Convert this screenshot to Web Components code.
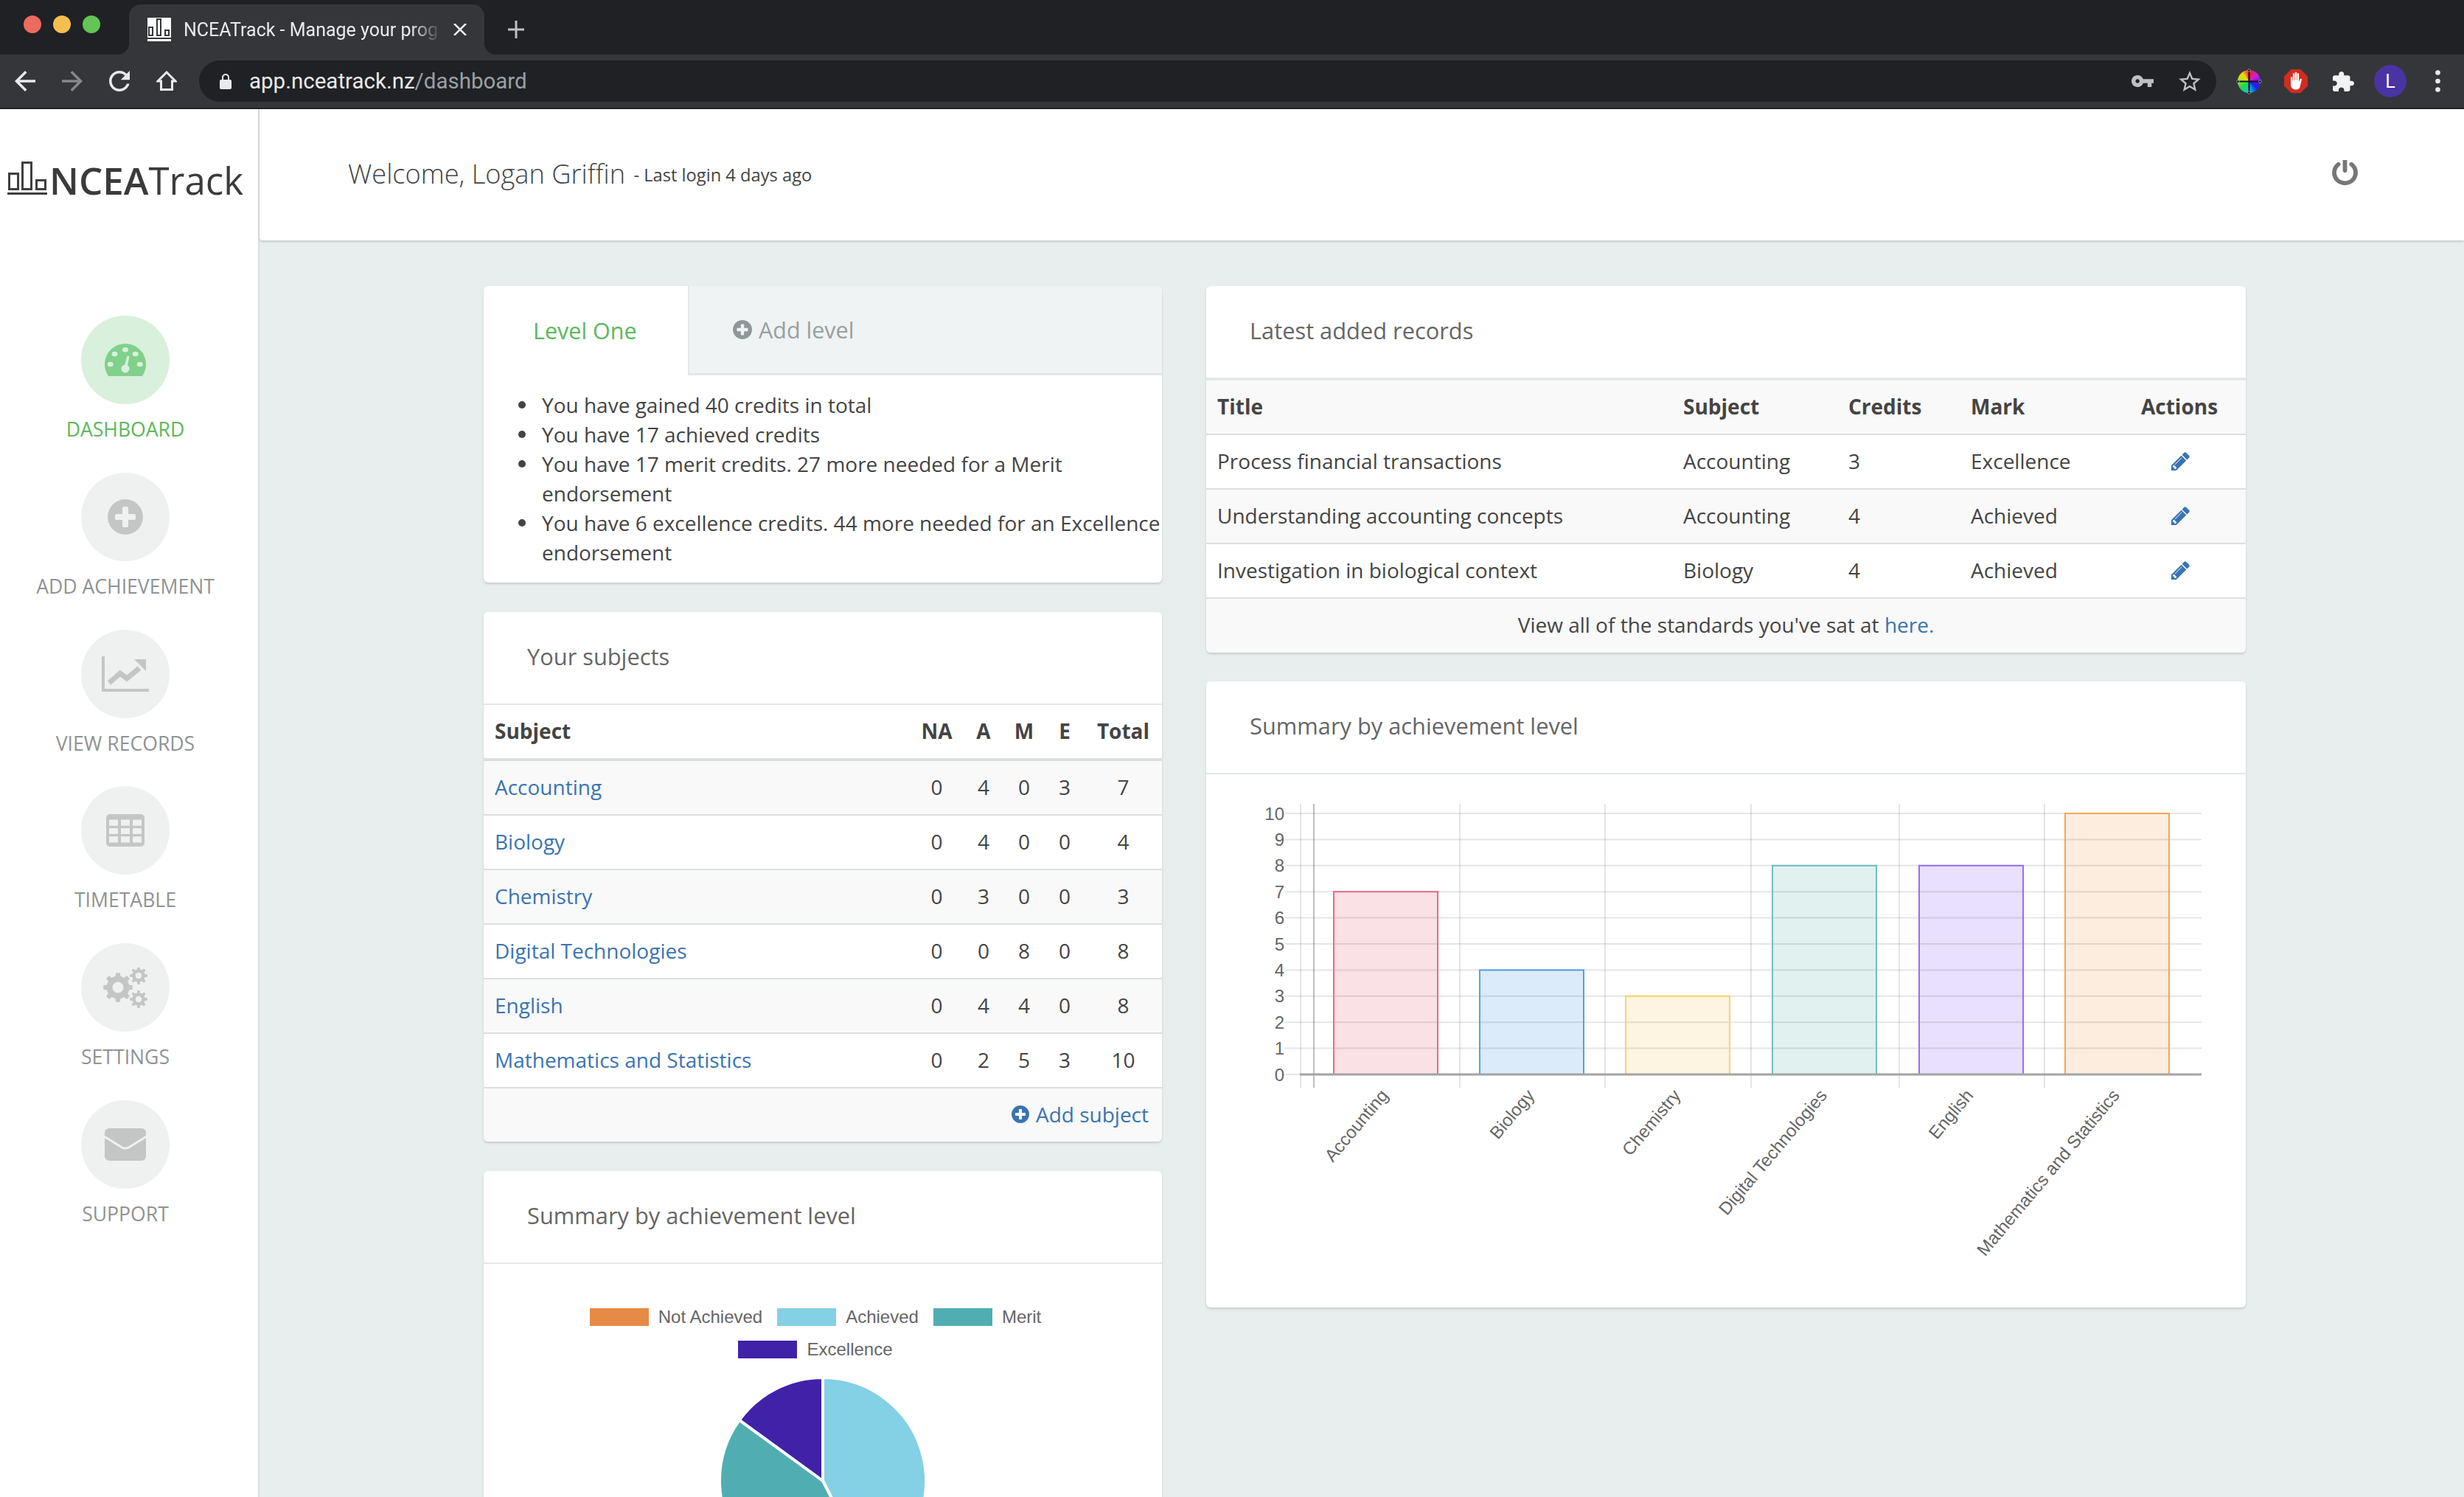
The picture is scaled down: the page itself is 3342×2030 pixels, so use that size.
<!DOCTYPE html>
<html lang="en">
<head>
<meta charset="utf-8">
<title>NCEATrack</title>
<style>
  html, body { margin: 0; height: 100%; overflow: hidden; background: #e8eded; }
  body { font-family: "Open Sans", "Liberation Sans", sans-serif; color: #444; }
  .page { display: flex; height: 1882px; overflow: hidden; }
  .content { flex: 1; display: flex; flex-direction: column; min-width: 0; }
  .columns { display: flex; align-items: flex-start; gap: 60px; padding: 62px 0 0 304px; }
  .col-left { width: 920px; display: flex; flex-direction: column; gap: 40px; flex: none; }
  .col-right { width: 1410px; display: flex; flex-direction: column; gap: 39px; flex: none; }
</style>
</head>
<body>
<browser-chrome></browser-chrome>
<div class="page">
  <side-nav>
    <nav-item label="DASHBOARD" active>
      <svg slot="icon" width="56" height="44" viewBox="0 0 56 44">
        <path d="M5 44A28 28 0 1 1 51 44Z" fill="#81d08b"/>
        <g fill="#d9f0dc">
          <ellipse cx="28" cy="8.3" rx="4" ry="3.3"/><ellipse cx="13.5" cy="14" rx="4" ry="3.3"/>
          <ellipse cx="41.7" cy="14" rx="4" ry="3.3"/><ellipse cx="7.7" cy="28" rx="4" ry="3.3"/>
          <ellipse cx="47.7" cy="28" rx="4" ry="3.3"/><circle cx="28" cy="34" r="5.5"/>
          <path d="M26 33 30.5 16.5 33.5 17 30 34Z"/>
        </g>
      </svg>
    </nav-item>
    <nav-item label="ADD ACHIEVEMENT">
      <svg slot="icon" width="48" height="48" viewBox="128 128 1536 1536"><path fill="#c4c6c5" d="M1344 960v-128q0-26-19-45t-45-19h-256v-256q0-26-19-45t-45-19h-128q-26 0-45 19t-19 45v256h-256q-26 0-45 19t-19 45v128q0 26 19 45t45 19h256v256q0 26 19 45t45 19h128q26 0 45-19t19-45v-256h256q26 0 45-19t19-45zm320-64q0 209-103 385.5t-279.5 279.5-385.5 103-385.5-103-279.5-279.5-103-385.5 103-385.5 279.5-279.5 385.5-103 385.5 103 279.5 279.5 103 385.5z"/></svg>
    </nav-item>
    <nav-item label="VIEW RECORDS">
      <svg slot="icon" width="64" height="48" viewBox="0 0 64 48">
        <path d="M0 0h4v44h60v4H0Z" fill="#c4c6c5"/>
        <path d="M10 36 25 23 34 30 51 16" fill="none" stroke="#c4c6c5" stroke-width="7"/>
        <path d="M44 4H60V20Z" fill="#c4c6c5"/>
      </svg>
    </nav-item>
    <nav-item label="TIMETABLE">
      <svg slot="icon" width="52" height="44" viewBox="0 0 52 44">
        <path fill-rule="evenodd" fill="#c4c6c5" d="M5 0H47A5 5 0 0 1 52 5V39A5 5 0 0 1 47 44H5A5 5 0 0 1 0 39V5A5 5 0 0 1 5 0ZM4 7.500V15.800H16V7.500ZM20 7.500V15.800H32V7.500ZM36 7.500V15.800H48V7.500ZM4 19V27H16V19ZM20 19V27H32V19ZM36 19V27H48V19ZM4 30.200V38.500H16V30.200ZM20 30.200V38.500H32V30.200ZM36 30.200V38.500H48V30.200Z"/>
      </svg>
    </nav-item>
    <nav-item label="SETTINGS">
      <cog-icon slot="icon"></cog-icon>
    </nav-item>
    <nav-item label="SUPPORT">
      <svg slot="icon" width="56" height="44" viewBox="0 0 56 44">
        <rect width="56" height="44" rx="6" fill="#c4c6c5"/>
        <path d="M-1 11 23.500 26Q28 28.500 32.500 26L57 11" fill="none" stroke="#eff1f1" stroke-width="3"/>
      </svg>
    </nav-item>
  </side-nav>

  <div class="content">
    <top-bar></top-bar>
    <div class="columns">
      <div class="col-left">
        <level-panel></level-panel>
        <app-card heading="Your subjects">
          <subjects-table></subjects-table>
        </app-card>
        <app-card heading="Summary by achievement level">
          <pie-chart></pie-chart>
        </app-card>
      </div>
      <div class="col-right">
        <app-card heading="Latest added records">
          <records-table></records-table>
        </app-card>
        <app-card heading="Summary by achievement level">
          <bar-chart></bar-chart>
        </app-card>
      </div>
    </div>
  </div>
</div>

<script>
// BROWSER WINDOW BAR
var template_chrome = document.createElement("template");
template_chrome.innerHTML = `
<style>
  :host { display: block; height: 148px; background: #202124; font-family: Roboto, "Liberation Sans", sans-serif; }
  .strip { height: 74px; display: flex; position: relative; background: #202124; }
  .lights { display: flex; gap: 16px; padding: 21px 0 0 32px; width: 175px; box-sizing: border-box; flex: none; }
  .lights i { width: 24px; height: 24px; border-radius: 50%; display: block; }
  .tab { flex: none; width: 482px; height: 68px; margin-top: 6px; background: #35363a; border-radius: 16px 16px 0 0; display: flex; align-items: center; position: relative; padding: 0 24px 0 25px; box-sizing: border-box; }
  .tab::before, .tab::after { content: ""; position: absolute; bottom: 0; width: 16px; height: 16px; }
  .tab::before { left: -16px; background: radial-gradient(circle at 0 0, transparent 16px, #35363a 16.5px); }
  .tab::after { right: -16px; background: radial-gradient(circle at 100% 0, transparent 16px, #35363a 16.5px); }
  .title { margin-left: 17px; width: 350px; font-size: 25px; color: #e8eaed; white-space: nowrap; -webkit-mask-image: linear-gradient(90deg, #000 88%, transparent 100%); mask-image: linear-gradient(90deg, #000 88%, transparent 100%); }
  .close { margin-left: 16px; flex: none; }
  .plus { margin: 28px 0 0 32px; flex: none; }
  .tools { height: 72px; background: #35363a; border-bottom: 2px solid #202124; display: flex; align-items: center; padding-left: 20px; }
  .nav { display: flex; gap: 36px; flex: none; }
  .omni { margin-left: 30px; width: 2736px; height: 56px; border-radius: 28px; background: #202124; flex: none; display: flex; align-items: center; padding: 0 21px 0 28px; box-sizing: border-box; }
  .url { margin-left: 24px; font-size: 29.500px; color: #e8eaed; flex: 1; white-space: nowrap; }
  .url span { color: #9aa0a6; }
  .wheel { width: 31px; height: 31px; border-radius: 50%; background: conic-gradient(#e8203a, #d21fd6 50deg, #5012f0 100deg, #0a28f0 130deg, #12c6d8 180deg, #2bd642 235deg, #b6e61d 285deg, #f8d21a 320deg, #e8203a); position: relative; margin-left: 29px; flex: none; }
  .wheel svg { position: absolute; left: -2px; top: -2px; }
  .avatar { width: 44px; height: 44px; border-radius: 50%; background: #4a33a3; color: #fff; font-size: 25px; display: flex; align-items: center; justify-content: center; margin-left: 27px; flex: none; }
</style>
<div class="strip">
  <div class="lights"><i style="background:#ed6a5e"></i><i style="background:#f5bf4f"></i><i style="background:#62c554"></i></div>
  <div class="tab">
    <svg width="32" height="32" viewBox="0 0 32 32" style="flex:none">
      <rect width="32" height="32" fill="#fff"/>
      <g fill="none" stroke="#35363a" stroke-width="2">
        <rect x="2" y="13" width="5" height="11"/><rect x="13" y="2" width="5" height="22"/><rect x="24" y="17" width="5" height="7"/>
      </g>
      <rect y="27" width="32" height="2" fill="#35363a"/>
    </svg>
    <div class="title">NCEATrack - Manage your prog</div>
    <svg class="close" width="18" height="16" viewBox="0 0 18 16"><path d="M1 0 17 16M17 0 1 16" stroke="#e8eaed" stroke-width="2.500"/></svg>
  </div>
  <svg class="plus" width="22" height="24" viewBox="0 0 22 24"><path d="M11 0V24M0 12H22" stroke="#bdc1c6" stroke-width="3"/></svg>
</div>
<div class="tools">
  <div class="nav">
    <svg width="28" height="28" viewBox="4 4 16 16"><path fill="#e8eaed" d="M20 11H7.830l5.590-5.590L12 4l-8 8 8 8 1.410-1.410L7.830 13H20v-2z"/></svg>
    <svg width="28" height="28" viewBox="4 4 16 16"><path fill="#84878b" d="M12 4l-1.410 1.410L16.170 11H4v2h12.170l-5.580 5.590L12 20l8-8z"/></svg>
    <svg width="28" height="28" viewBox="4 4 16 16"><path fill="#e8eaed" d="M17.650 6.350C16.200 4.900 14.210 4 12 4c-4.420 0-7.990 3.580-7.990 8s3.570 8 7.990 8c3.730 0 6.840-2.550 7.730-6h-2.080c-.82 2.330-3.040 4-5.650 4-3.310 0-6-2.690-6-6s2.690-6 6-6c1.660 0 3.140.69 4.220 1.780L13 11h7V4l-2.350 2.350z"/></svg>
    <svg width="28" height="27" viewBox="0 0 28 27"><path fill="none" stroke="#e8eaed" stroke-width="3" d="M14 2 26 14H21.500V25.500H6.500V14H2Z"/></svg>
  </div>
  <div class="omni">
    <svg width="16" height="21" viewBox="0 0 16 21" style="flex:none"><rect y="8" width="16" height="13" rx="2" fill="#e8eaed"/><path d="M4 9V5a4 4 0 0 1 8 0v4" fill="none" stroke="#e8eaed" stroke-width="2"/></svg>
    <div class="url">app.nceatrack.nz<span>/dashboard</span></div>
    <svg width="30" height="16" viewBox="1 6 22 12" preserveAspectRatio="none" style="flex:none"><path fill="#bdc1c6" d="M12.650 10C11.830 7.670 9.610 6 7 6c-3.310 0-6 2.690-6 6s2.690 6 6 6c2.610 0 4.830-1.670 5.650-4H17v4h4v-4h2v-4H12.650zM7 14c-1.100 0-2-.9-2-2s.9-2 2-2 2 .9 2 2-.9 2-2 2z"/></svg>
    <svg width="30" height="28" viewBox="2 2 20 19" style="margin-left:34px;flex:none"><path fill="#bdc1c6" d="M22 9.240l-7.190-.62L12 2 9.190 8.630 2 9.240l5.460 4.730L5.820 21 12 17.270 18.180 21l-1.630-7.030L22 9.240zM12 15.400l-3.760 2.270 1-4.280-3.320-2.880 4.380-.38L12 6.100l1.710 4.040 4.380.38-3.320 2.880 1 4.280L12 15.400z"/></svg>
  </div>
  <div class="wheel">
    <svg width="35" height="35" viewBox="0 0 35 35"><path d="M17.500 2V33M2 17.500H33" stroke="#111" stroke-width="2"/><g fill="#111" stroke="#ddd" stroke-width=".6"><circle cx="17.500" cy="2.500" r="1.800"/><circle cx="17.500" cy="32.500" r="1.800"/><circle cx="2.500" cy="17.500" r="1.800"/><circle cx="32.500" cy="17.500" r="1.800"/></g></svg>
  </div>
  <svg width="32" height="32" viewBox="0 0 32 32" style="margin-left:32px;flex:none">
    <path fill="#d12c20" d="M9.500 0H22.500L32 9.500V22.500L22.500 32H9.500L0 22.500V9.500Z"/>
    <path fill="#fff" d="M9 11.500c0-1.700 2.300-1.700 2.300 0V15h.6V6.500c0-1.700 2.300-1.700 2.300 0V15h.6V5c0-1.700 2.400-1.700 2.400 0V15h.6V6.500c0-1.700 2.300-1.700 2.300 0V17l1.500-3.500c.7-1.600 2.800-.8 2.200.8L21.500 24c-.8 2-2.200 3.500-5.500 3.500-4 0-7-2.500-7-6.500Z"/>
  </svg>
  <svg width="29" height="27" viewBox="2 1 21 21" preserveAspectRatio="none" style="margin-left:34px;flex:none"><path fill="#f1f3f4" d="M20.500 11H19V7c0-1.100-.9-2-2-2h-4V3.500C13 2.120 11.880 1 10.500 1S8 2.120 8 3.500V5H4c-1.100 0-1.990.9-1.990 2v3.800H3.500c1.490 0 2.700 1.210 2.700 2.700s-1.210 2.700-2.700 2.700H2V20c0 1.100.9 2 2 2h3.800v-1.500c0-1.490 1.210-2.700 2.700-2.700 1.490 0 2.700 1.210 2.700 2.700V22H17c1.100 0 2-.9 2-2v-4h1.500c1.380 0 2.500-1.120 2.500-2.500S21.880 11 20.500 11z"/></svg>
  <div class="avatar">L</div>
  <svg width="7" height="30" viewBox="0 0 7 30" style="margin-left:39px;flex:none"><circle cx="3.500" cy="3.500" r="3.300" fill="#e8eaed"/><circle cx="3.500" cy="15" r="3.300" fill="#e8eaed"/><circle cx="3.500" cy="26.500" r="3.300" fill="#e8eaed"/></svg>
</div>
`;
class BrowserChrome extends HTMLElement {
  constructor(){
    super();
    this.attachShadow({mode:"open"}).appendChild(template_chrome.content.cloneNode(true));
  }
}
customElements.define("browser-chrome", BrowserChrome);

// SIDEBAR
var template_side = document.createElement("template");
template_side.innerHTML = `
<style>
  :host { display: flex; flex-direction: column; width: 352px; flex: none; background: #fff; border-right: 2px solid #dcdfdf; box-sizing: border-box; }
  .logo { height: 178px; display: flex; align-items: flex-start; padding: 71px 0 0 10px; box-sizing: border-box; color: #3b3b3b; font-size: 51px; line-height: 50px; }
  .logo span { margin-left: 3px; white-space: nowrap; }
  .logo b { font-weight: 600; }
  .list { display: flex; flex-direction: column; gap: 38.800px; padding: 102px 10px 0 0; }
</style>
<div class="logo">
  <svg width="54" height="46" viewBox="0 0 54 46" style="flex:none">
    <g fill="none" stroke="#3f3f3f" stroke-width="3">
      <rect x="2.500" y="16.500" width="12" height="21"/><rect x="20.500" y="1.500" width="12" height="36"/><rect x="39.500" y="25.500" width="12" height="12"/>
    </g>
    <rect y="42" width="54" height="3" fill="#3f3f3f"/>
  </svg>
  <span><b>NCEA</b>Track</span>
</div>
<div class="list"><slot></slot></div>
`;
class SideNav extends HTMLElement {
  constructor(){
    super();
    this.attachShadow({mode:"open"}).appendChild(template_side.content.cloneNode(true));
  }
}
customElements.define("side-nav", SideNav);

var template_item = document.createElement("template");
template_item.innerHTML = `
<style>
  :host { display: flex; flex-direction: column; align-items: center; color: #8f9393; font-size: 26.600px; }
  :host([active]) { color: #5cb85c; }
  .circle { width: 120px; height: 120px; border-radius: 50%; background: #eff1f1; display: flex; align-items: center; justify-content: center; }
  :host([active]) .circle { background: #d9f0dc; }
  .label { margin-top: 14px; line-height: 40px; white-space: nowrap; }
</style>
<div class="circle"><slot name="icon"></slot></div>
<div class="label"></div>
`;
class NavItem extends HTMLElement {
  constructor(){
    super();
    this.attachShadow({mode:"open"}).appendChild(template_item.content.cloneNode(true));
  }
  connectedCallback(){
    this.shadowRoot.querySelector(".label").textContent = this.getAttribute("label");
  }
}
customElements.define("nav-item", NavItem);

// the three gears are the same shape at three sizes
function gearPath(cx, cy, ro, ri, hole, teeth){
  var d = "", step = Math.PI * 2 / teeth;
  for (var t = 0; t < teeth; t++){
    var a = t * step;
    var pts = [[ri, a - step*.5], [ri, a - step*.28], [ro, a - step*.18], [ro, a + step*.18], [ri, a + step*.28]];
    pts.forEach(function(p, i){
      d += (t === 0 && i === 0 ? "M" : "L") + (cx + p[0]*Math.cos(p[1])).toFixed(2) + " " + (cy + p[0]*Math.sin(p[1])).toFixed(2);
    });
  }
  d += "Z";
  d += "M" + (cx-hole) + " " + cy + "a" + hole + " " + hole + " 0 1 0 " + hole*2 + " 0a" + hole + " " + hole + " 0 1 0 " + (-hole*2) + " 0Z";
  return d;
}
class CogIcon extends HTMLElement {
  constructor(){
    super();
    this.attachShadow({mode:"open"}).innerHTML = `
      <style>:host { display: block; width: 60px; height: 55px; } svg { display: block; }</style>
      <svg width="60" height="55" viewBox="0 0 60 55">
        <path fill="#c4c6c5" fill-rule="evenodd" d="${gearPath(20,27,20,15.5,7.5,8)}"/>
        <path fill="#c4c6c5" fill-rule="evenodd" d="${gearPath(48,11,12,8.8,4.2,8)}"/>
        <path fill="#c4c6c5" fill-rule="evenodd" d="${gearPath(48,43,12,8.8,4.2,8)}"/>
      </svg>`;
  }
}
customElements.define("cog-icon", CogIcon);

// TOP BAR
var template_top = document.createElement("template");
template_top.innerHTML = `
<style>
  :host { display: flex; align-items: center; justify-content: space-between; height: 178px; flex: none; background: #fff; border-bottom-left-radius: 4px; box-shadow: 0 2px 3px rgba(0,0,0,.14); padding: 0 144px 0 120px; box-sizing: border-box; position: relative; }
  .hello { font-size: 36.200px; font-weight: 300; color: #444; white-space: nowrap; margin-top: -5px; }
  small { font-size: 23.700px; font-weight: 400; color: #444; vertical-align: 3px; margin-left: 2px; }
  svg { display: block; margin-top: -4px; }
</style>
<div class="hello">Welcome, Logan Griffin <small>- Last login 4 days ago</small></div>
<svg width="35" height="37" viewBox="128 128 1536 1664" preserveAspectRatio="none"><path fill="#777" d="M1664 896q0 156-61 298t-164 245-245 164-298 61-298-61-245-164-164-245-61-298q0-182 80.500-343t226.500-270q43-32 95.500-25t83.500 50q32 42 24.500 94.500t-49.500 84.500q-98 74-151.500 181t-53.500 228q0 104 40.500 198.500t109.500 163.500 163.500 109.500 198.500 40.500 198.500-40.500 163.500-109.500 109.500-163.500 40.500-198.500q0-121-53.500-228t-151.500-181q-42-32-49.500-84.500t24.500-94.500q31-43 84-50t95 25q146 109 226.500 270t80.500 343zm-640-768v640q0 52-38 90t-90 38-90-38-38-90v-640q0-52 38-90t90-38 90 38 38 90z"/></svg>
`;
class TopBar extends HTMLElement {
  constructor(){
    super();
    this.attachShadow({mode:"open"}).appendChild(template_top.content.cloneNode(true));
  }
}
customElements.define("top-bar", TopBar);

// CARD WITH A TITLE ROW
var template_card = document.createElement("template");
template_card.innerHTML = `
<style>
  :host { display: block; background: #fff; border-radius: 6px; box-shadow: 0 2px 3px rgba(0,0,0,.14); font-size: 28px; color: #444; }
  .head { height: 126px; display: flex; align-items: center; padding: 0 0 4px 59px; box-sizing: border-box; font-size: 30.800px; color: #666; border-bottom: 2px solid #e4e8ea; }
</style>
<div class="head"></div>
<slot></slot>
`;
class AppCard extends HTMLElement {
  constructor(){
    super();
    this.attachShadow({mode:"open"}).appendChild(template_card.content.cloneNode(true));
  }
  connectedCallback(){
    this.shadowRoot.querySelector(".head").textContent = this.getAttribute("heading");
  }
}
customElements.define("app-card", AppCard);

// LEVEL TABS AND CREDIT SUMMARY
var template_level = document.createElement("template");
template_level.innerHTML = `
<style>
  :host { display: block; background: #fff; border-radius: 6px; box-shadow: 0 2px 3px rgba(0,0,0,.14); font-size: 28px; color: #444; overflow: hidden; }
  .tabs { display: flex; height: 121px; }
  .tab { display: flex; align-items: center; font-size: 30.500px; box-sizing: border-box; }
  .active { width: 279px; color: #5cb85c; padding: 0 0 2px 67px; border-right: 2px solid #e4e8ea; }
  .other { flex: 1; background: #eff3f4; color: #98a0a2; padding-left: 59px; border-bottom: 3px solid #e4e8ea; }
  .other svg { margin-right: 9px; flex: none; }
  ul { margin: 0; padding: 20px 0 21px 79px; list-style: none; }
  li { line-height: 40px; position: relative; }
  li::before { content: ""; position: absolute; left: -32px; top: 15px; width: 10px; height: 10px; border-radius: 50%; background: #444; }
</style>
<div class="tabs">
  <div class="tab active">Level One</div>
  <div class="tab other">
    <svg width="26" height="26" viewBox="128 128 1536 1536"><path fill="#8f979a" d="M1344 960v-128q0-26-19-45t-45-19h-256v-256q0-26-19-45t-45-19h-128q-26 0-45 19t-19 45v256h-256q-26 0-45 19t-19 45v128q0 26 19 45t45 19h256v256q0 26 19 45t45 19h128q26 0 45-19t19-45v-256h256q26 0 45-19t19-45zm320-64q0 209-103 385.500t-279.500 279.500-385.500 103-385.500-103-279.500-279.500-103-385.500 103-385.500 279.500-279.500 385.500-103 385.500 103 279.500 279.500 103 385.500z"/></svg>
    Add level
  </div>
</div>
<ul>
  <li>You have gained 40 credits in total</li>
  <li>You have 17 achieved credits</li>
  <li>You have 17 merit credits. 27 more needed for a Merit endorsement</li>
  <li>You have 6 excellence credits. 44 more needed for an Excellence endorsement</li>
</ul>
`;
class LevelPanel extends HTMLElement {
  constructor(){
    super();
    this.attachShadow({mode:"open"}).appendChild(template_level.content.cloneNode(true));
  }
}
customElements.define("level-panel", LevelPanel);

var tableStyle = `
  :host { display: block; }
  table { width: 100%; border-collapse: separate; border-spacing: 0; table-layout: fixed; }
  th, td { box-sizing: border-box; padding: 0 15px 2px; height: 74px; border-bottom: 2px solid #dcdfdf; text-align: left; font-weight: 400; white-space: nowrap; }
  th { font-weight: 700; }
  a { color: #3a74b0; text-decoration: none; }
  .foot { height: 72px; background: #f9f9f9; display: flex; align-items: center; border-radius: 0 0 6px 6px; padding: 0 18px 2px 0; box-sizing: border-box; }
`;

// SUBJECT TABLE
class SubjectsTable extends HTMLElement {
  constructor(){
    super();
    var rows = [
      ["Accounting",0,4,0,3,7],
      ["Biology",0,4,0,0,4],
      ["Chemistry",0,3,0,0,3],
      ["Digital Technologies",0,0,8,0,8],
      ["English",0,4,4,0,8],
      ["Mathematics and Statistics",0,2,5,3,10]
    ];
    var body = rows.map(function(r, i){
      return `<tr class="${i % 2 ? "" : "odd"}"><td><a>${r[0]}</a></td>` + r.slice(1).map(function(v){ return `<td class="n">${v}</td>`; }).join("") + `</tr>`;
    }).join("");
    this.attachShadow({mode:"open"}).innerHTML = `
      <style>${tableStyle}
        .n { text-align: center; padding: 0 0 2px; }
        thead th { height: 76px; border-bottom-width: 4px; }
        th.n { font-weight: 700; }
        .odd td { background: #f9f9f9; }
        .foot { justify-content: flex-end; }
        .foot svg { margin-right: 9px; }
      </style>
      <table>
        <colgroup><col style="width:578px"><col style="width:73px"><col style="width:54px"><col style="width:56px"><col style="width:54px"><col style="width:105px"></colgroup>
        <thead><tr><th>Subject</th><th class="n">NA</th><th class="n">A</th><th class="n">M</th><th class="n">E</th><th class="n">Total</th></tr></thead>
        <tbody>${body}</tbody>
      </table>
      <div class="foot"><a style="display:flex;align-items:center">
        <svg width="24" height="24" viewBox="128 128 1536 1536"><path fill="#3a74b0" d="M1344 960v-128q0-26-19-45t-45-19h-256v-256q0-26-19-45t-45-19h-128q-26 0-45 19t-19 45v256h-256q-26 0-45 19t-19 45v128q0 26 19 45t45 19h256v256q0 26 19 45t45 19h128q26 0 45-19t19-45v-256h256q26 0 45-19t19-45zm320-64q0 209-103 385.500t-279.500 279.500-385.500 103-385.500-103-279.500-279.500-103-385.500 103-385.500 279.500-279.500 385.500-103 385.500 103 279.500 279.500 103 385.500z"/></svg>
        Add subject</a></div>`;
  }
}
customElements.define("subjects-table", SubjectsTable);

// LATEST RECORDS TABLE
class RecordsTable extends HTMLElement {
  constructor(){
    super();
    var rows = [
      ["Process financial transactions","Accounting","3","Excellence"],
      ["Understanding accounting concepts","Accounting","4","Achieved"],
      ["Investigation in biological context","Biology","4","Achieved"]
    ];
    var pencil = `<svg width="25" height="25" viewBox="128 128 1536 1536"><path fill="#3a74b0" d="M491 1536l91-91-235-235-91 91v107h128v128h107zm523-928q0-22-22-22-10 0-17 7l-542 542q-7 7-7 17 0 22 22 22 10 0 17-7l542-542q7-7 7-17zm-54-192l416 416-832 832h-416v-416zm683 96q0 53-37 90l-166 166-416-416 166-165q36-38 90-38 53 0 91 38l235 234q37 39 37 91z"/></svg>`;
    var body = rows.map(function(r, i){
      return `<tr class="${i % 2 ? "odd" : ""}">` + r.map(function(v){ return `<td>${v}</td>`; }).join("") + `<td class="act">${pencil}</td></tr>`;
    }).join("");
    this.attachShadow({mode:"open"}).innerHTML = `
      <style>${tableStyle}
        table { border-top: 2px solid #e4e8ea; }
        thead th { background: #f9f9f9; height: 74px; }
        .odd td { background: #f9f9f9; }
        .act { padding: 0 0 2px 56px; }
        .act svg { display: block; }
        .foot { justify-content: center; height: 73px; padding: 0 0 3px; }
      </style>
      <table>
        <colgroup><col style="width:632px"><col style="width:224px"><col style="width:166px"><col style="width:231px"><col style="width:157px"></colgroup>
        <thead><tr><th>Title</th><th>Subject</th><th>Credits</th><th>Mark</th><th>Actions</th></tr></thead>
        <tbody>${body}</tbody>
      </table>
      <div class="foot"><span>View all of the standards you've sat at <a>here.</a></span></div>`;
  }
}
customElements.define("records-table", RecordsTable);

// PIE CHART (runs off the bottom of the window)
class PieChart extends HTMLElement {
  constructor(){
    super();
    var cx = 460, cy = 166, r = 140;
    var slices = [[17,"#84d0e4"],[17,"#50aeb2"],[6,"#3f22a8"]];
    var from = -Math.PI/2, arcs = "";
    slices.forEach(function(s){
      var to = from + s[0]/40*Math.PI*2;
      var big = to - from > Math.PI ? 1 : 0;
      arcs += `<path d="M${cx} ${cy}L${(cx+r*Math.cos(from)).toFixed(2)} ${(cy+r*Math.sin(from)).toFixed(2)}A${r} ${r} 0 ${big} 1 ${(cx+r*Math.cos(to)).toFixed(2)} ${(cy+r*Math.sin(to)).toFixed(2)}Z" fill="${s[1]}" stroke="#fff" stroke-width="4" stroke-linejoin="round"/>`;
      from = to;
    });
    var legend = [["Not Achieved","#e68a45"],["Achieved","#84d0e4"],["Merit","#50aeb2"],["Excellence","#3f22a8"]].map(function(l){
      return `<div class="item"><i style="background:${l[1]}"></i>${l[0]}</div>`;
    }).join("");
    this.attachShadow({mode:"open"}).innerHTML = `
      <style>
        :host { display: block; height: 640px; font-family: "Liberation Sans", Arial, sans-serif; font-size: 24px; color: #666; }
        .legend { display: flex; flex-wrap: wrap; justify-content: center; gap: 20px 0; width: 660px; margin: 0 auto; padding-top: 60px; }
        .item { display: flex; align-items: center; height: 24px; line-height: 24px; padding-right: 20px; white-space: nowrap; }
        i { width: 80px; height: 24px; margin-right: 13px; display: block; }
        svg { display: block; }
      </style>
      <div class="legend">${legend}</div>
      <svg width="920" height="330" viewBox="0 0 920 330">${arcs}</svg>`;
  }
}
customElements.define("pie-chart", PieChart);

// BAR CHART, x and y are measured from the card's left edge and from the title rule
class BarChart extends HTMLElement {
  constructor(){
    super();
    var zero = 407, unit = 35.4, s = "";
    var labels = ["Accounting","Biology","Chemistry","Digital Technologies","English","Mathematics and Statistics"];
    var vals = [7,4,3,8,8,10];
    var fills = ["#fae1e6","#dcebf9","#fdf4e2","#e0f1f0","#e8e0fc","#fcedde"];
    var lines = ["#eb6987","#55a0e6","#fad26e","#73bebe","#966ef0","#f5a555"];
    var left = [173,371,569,768,967,1165];
    vals.forEach(function(val, i){
      s += `<rect x="${left[i]}" y="${zero - val*unit}" width="141" height="${val*unit}" fill="${fills[i]}"/>`;
    });
    [128, 146, 344, 541, 739, 940, 1137].forEach(function(x, i){
      s += `<line x1="${x}" x2="${x}" y1="40" y2="425" stroke="rgba(0,0,0,${i === 1 ? .25 : .1})" stroke-width="2"/>`;
    });
    for (var v = 1; v <= 10; v++){
      var y = zero - v*unit;
      s += `<line x1="107" x2="1350" y1="${y}" y2="${y}" stroke="rgba(0,0,0,.1)" stroke-width="2"/>`;
    }
    vals.forEach(function(val, i){
      s += `<rect x="${left[i]}" y="${zero - val*unit}" width="141" height="${val*unit}" fill="none" stroke="${lines[i]}" stroke-width="2"/>`;
    });
    s += `<line x1="107" x2="127" y1="${zero}" y2="${zero}" stroke="rgba(0,0,0,.1)" stroke-width="2"/>`;
    s += `<line x1="127" x2="1350" y1="${zero}" y2="${zero}" stroke="#a3a3a3" stroke-width="3"/>`;
    for (var n = 0; n <= 10; n++){
      s += `<text x="106" y="${zero - n*unit + 8.500}" text-anchor="end">${n}</text>`;
    }
    labels.forEach(function(t, i){
      var x = 248 + i*198.4, y = 436;
      s += `<text x="${x}" y="${y}" text-anchor="end" transform="rotate(-50 ${x} ${y})">${t}</text>`;
    });
    this.attachShadow({mode:"open"}).innerHTML = `
      <style>
        :host { display: block; height: 723px; }
        svg { display: block; }
        text { font-family: "Liberation Sans", Arial, sans-serif; font-size: 24px; fill: #666; }
      </style>
      <svg width="1410" height="723" viewBox="0 0 1410 723">${s}</svg>`;
  }
}
customElements.define("bar-chart", BarChart);
</script>
</body>
</html>
